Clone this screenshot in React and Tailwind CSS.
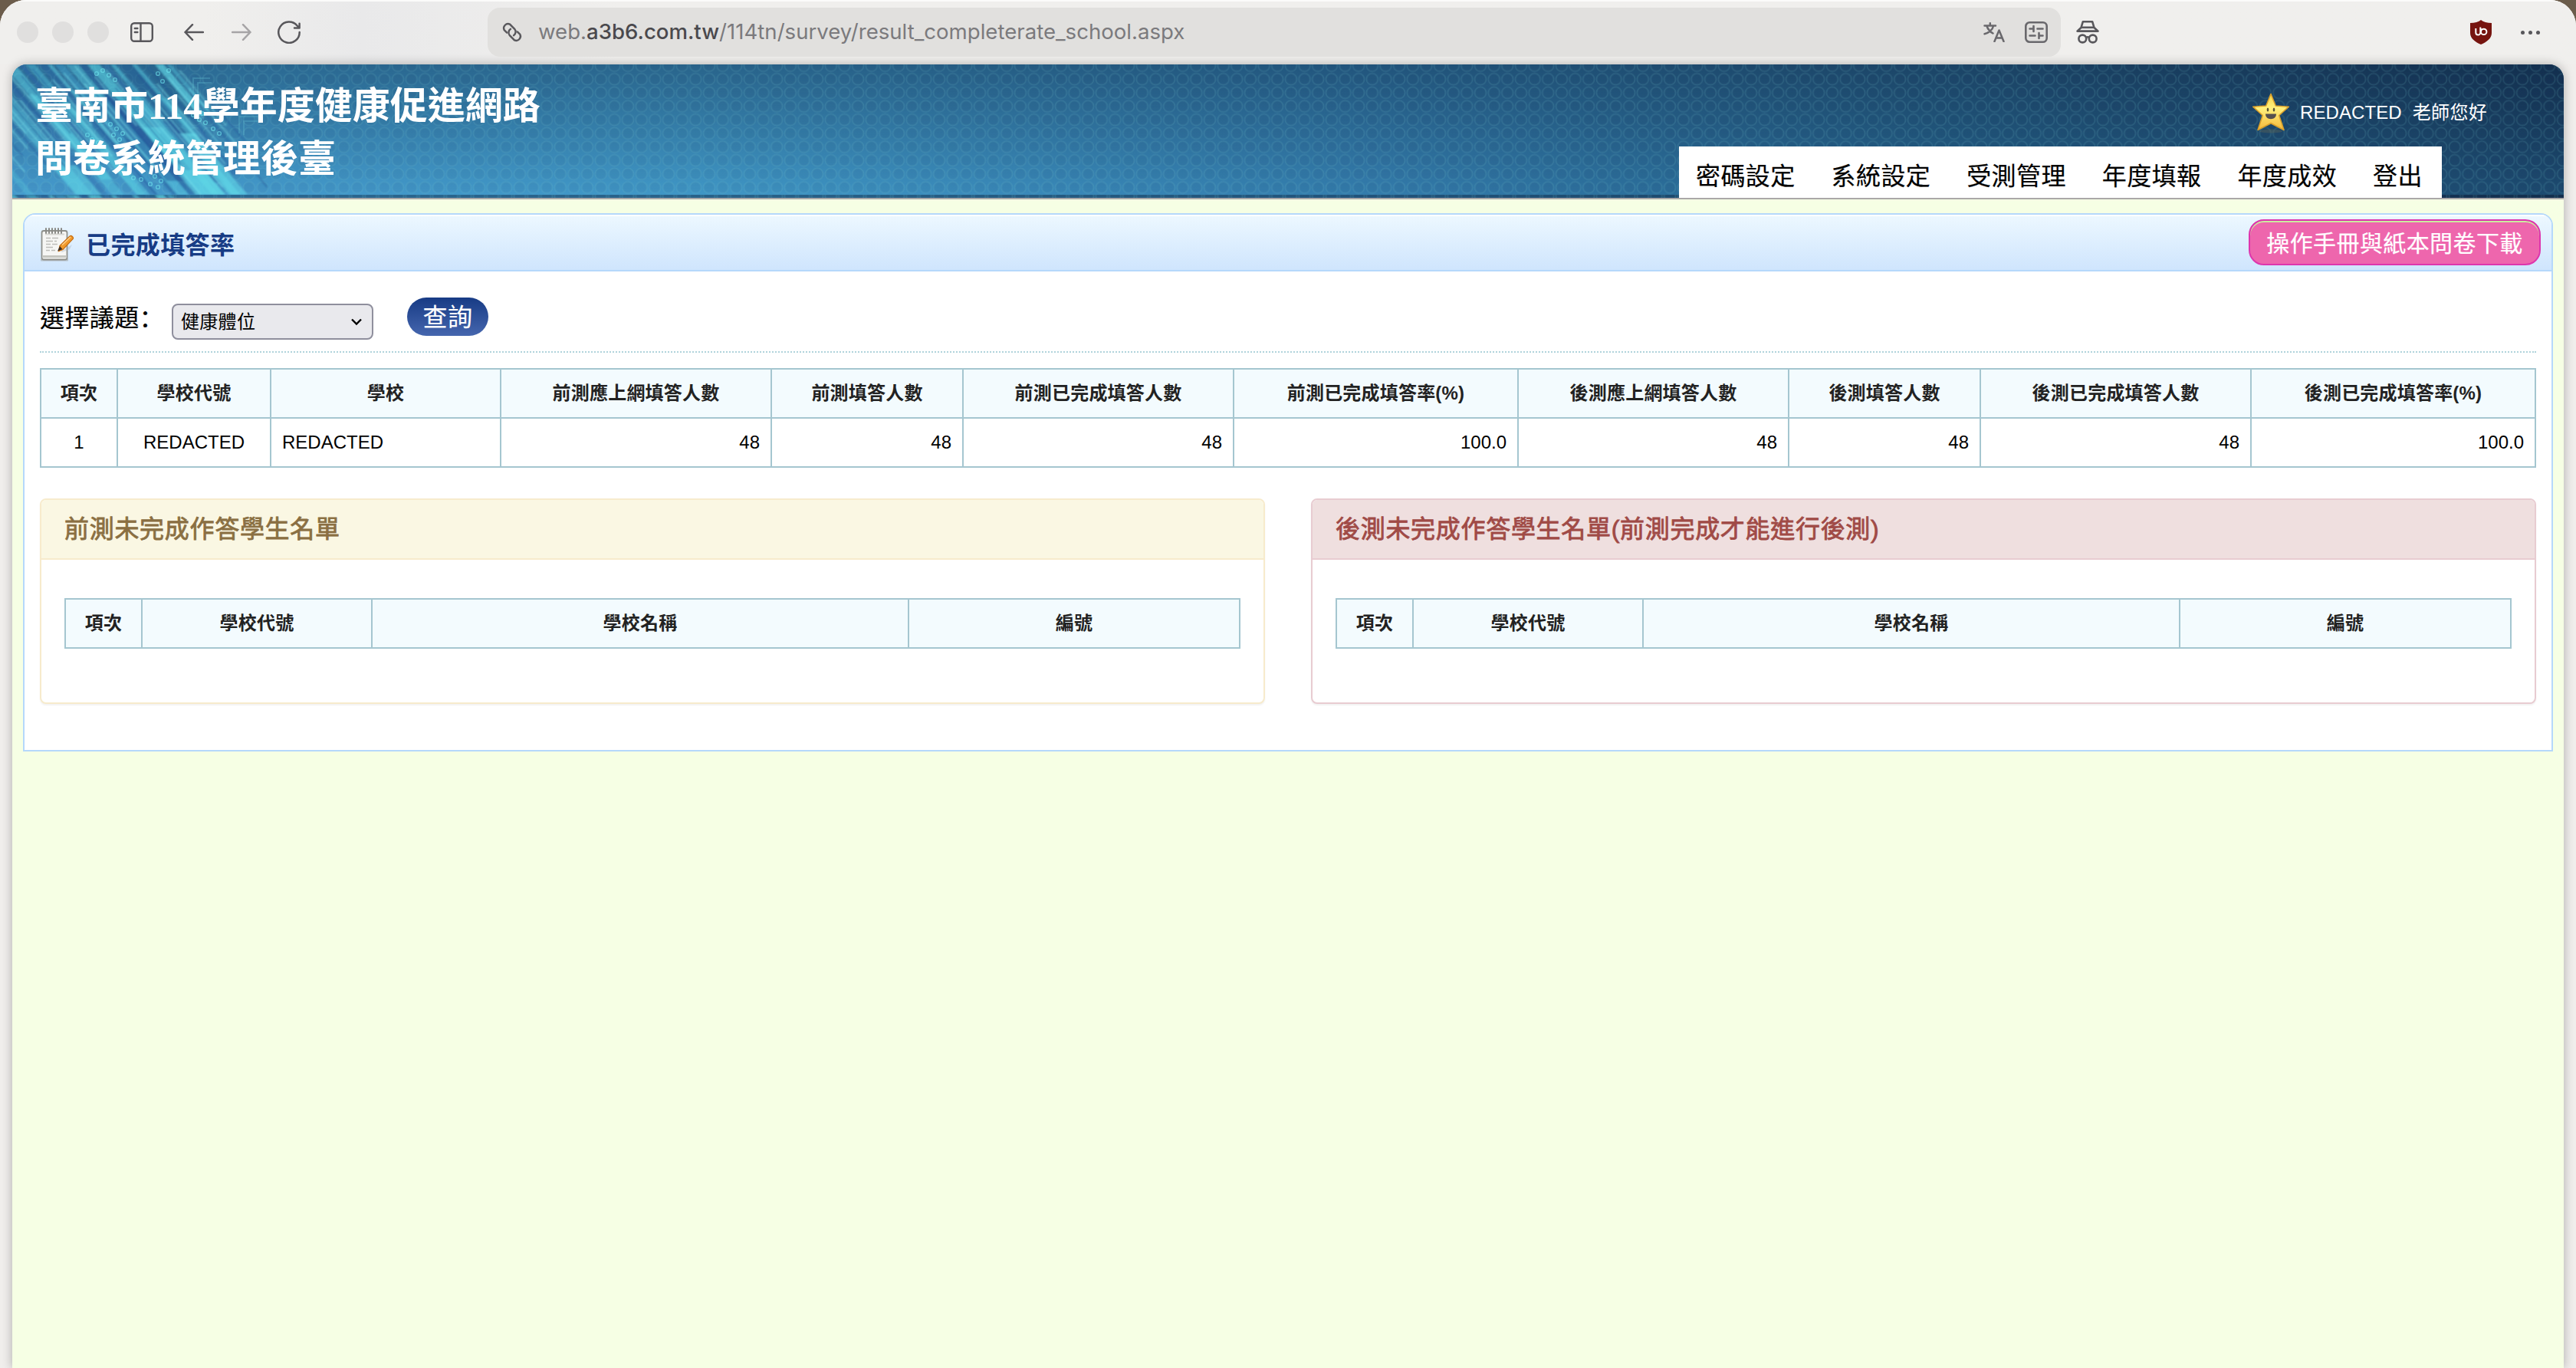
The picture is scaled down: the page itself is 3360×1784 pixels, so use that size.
import clsx from 'clsx'

const summaryColumns = [
  { label: '項次', value: '1', width: 100, align: 'center' },
  { label: '學校代號', value: 'REDACTED', width: 200, align: 'center' },
  { label: '學校', value: 'REDACTED', width: 300, align: 'left' },
  { label: '前測應上網填答人數', value: '48', width: 353, align: 'right' },
  { label: '前測填答人數', value: '48', width: 250, align: 'right' },
  { label: '前測已完成填答人數', value: '48', width: 353, align: 'right' },
  { label: '前測已完成填答率(%)', value: '100.0', width: 371, align: 'right' },
  { label: '後測應上網填答人數', value: '48', width: 353, align: 'right' },
  { label: '後測填答人數', value: '48', width: 250, align: 'right' },
  { label: '後測已完成填答人數', value: '48', width: 353, align: 'right' },
  { label: '後測已完成填答率(%)', value: '100.0', width: 371, align: 'right' },
]

const studentColumns = [
  { label: '項次', width: 100 },
  { label: '學校代號', width: 300 },
  { label: '學校名稱', width: 700 },
  { label: '編號', width: 432 },
]

const navItems = ['密碼設定', '系統設定', '受測管理', '年度填報', '年度成效', '登出']

// x, y, length (vertical), thickness, colour, opacity
const streaks = [
  [-60, 0, 170, 16, '#5fd6e6', 0.5],
  [-30, 0, 170, 8, '#2a62a4', 0.45],
  [-12, 0, 150, 12, '#59d0e2', 0.7],
  [8, 0, 120, 5, '#2b64a8', 0.7],
  [18, 0, 170, 9, '#4fc4dc', 0.6],
  [34, 0, 170, 10, '#2763a3', 0.5],
  [46, 0, 170, 4, '#63dcea', 0.6],
  [55, 0, 100, 9, '#3f9fc9', 0.7],
  [70, 0, 170, 12, '#56cfe2', 0.6],
  [86, 0, 170, 8, '#235a9b', 0.65],
  [98, 0, 125, 12, '#5bd8e6', 0.75],
  [116, 0, 150, 7, '#2a6aa9', 0.6],
  [128, 0, 170, 5, '#57cce0', 0.7],
  [138, 0, 90, 16, '#225b8f', 0.65],
  [156, 0, 110, 5, '#55c8dd', 0.65],
  [168, 0, 70, 14, '#246088', 0.6],
  [186, 0, 66, 9, '#62deea', 0.8],
  [201, 0, 60, 5, '#54c6db', 0.6],
  [214, 0, 45, 8, '#2a6f9b', 0.6],
  [20, 40, 130, 12, '#5ad4e5', 0.5],
  [60, 50, 120, 14, '#63dfeb', 0.45],
  [108, 42, 110, 20, '#1e4e95', 0.55],
  [150, 40, 130, 12, '#5bd3e4', 0.7],
  [188, 44, 50, 12, '#58cde0', 0.55],
  [-50, 90, 80, 8, '#55cbdf', 0.4],
  [170, 82, 88, 20, '#5fd9e8', 0.65],
  [196, 74, 80, 10, '#1f529a', 0.6],
  [218, 90, 80, 16, '#63dfeb', 0.75],
  [236, 84, 60, 8, '#2b66a6', 0.6],
  [50, 132, 38, 26, '#62dcea', 0.55],
  [130, 110, 60, 12, '#3a86bf', 0.75],
  [146, 96, 74, 5, '#1d4c92', 0.5],
  [212, 138, 32, 30, '#62dfea', 0.65],
  [250, 132, 38, 12, '#5ed8e8', 0.75],
]

const fineLines = Array.from({ length: 46 }, (_, i) => ({
  x: -110 + i * 7.3,
  y: (i * 37) % 60,
  len: 50 + ((i * 53) % 70),
  light: i % 3 !== 0,
}))

const sparks = [
  [118, 8], [126, 14], [110, 12], [134, 20], [190, 12], [196, 22], [204, 8],
  [128, 78], [136, 84], [144, 90], [132, 92], [140, 98], [98, 92], [104, 98], [112, 102],
  [236, 66], [244, 72], [252, 76], [248, 64], [150, 142], [158, 148], [168, 150], [186, 146],
  [194, 152], [190, 160], [180, 156], [262, 84], [270, 90],
]

function HeaderArtwork() {
  return (
    <svg className="absolute inset-0 h-full w-full" viewBox="0 0 3328 174" preserveAspectRatio="none">
      <defs>
        <linearGradient id="low" x1="0" x2="1">
          <stop offset="0" stopColor="#469bce" />
          <stop offset="0.27" stopColor="#4097c6" />
          <stop offset="0.53" stopColor="#347dad" />
          <stop offset="0.75" stopColor="#25638c" />
          <stop offset="1" stopColor="#1d4b70" />
        </linearGradient>
        <linearGradient id="high" x1="0" x2="1">
          <stop offset="0" stopColor="#2c6c96" />
          <stop offset="0.27" stopColor="#29648b" />
          <stop offset="0.53" stopColor="#22557c" />
          <stop offset="0.75" stopColor="#1c4567" />
          <stop offset="1" stopColor="#132f4e" />
        </linearGradient>
        <linearGradient id="fade" x1="0" y1="0" x2="0" y2="1">
          <stop offset="0" stopColor="#fff" />
          <stop offset="1" stopColor="#000" />
        </linearGradient>
        <mask id="fadeMask">
          <rect width="3328" height="170" fill="url(#fade)" />
        </mask>
        <pattern id="rings" width="17.65" height="17.65" patternUnits="userSpaceOnUse" y="10.5">
          <circle cx="8.8" cy="8.8" r="7.4" fill="#0a2c4c" fillOpacity="0.05" stroke="#6fc3c9" strokeOpacity="0.15" strokeWidth="1.8" />
        </pattern>
        <clipPath id="tile">
          <rect width="3328" height="170" />
        </clipPath>
        <filter id="soft" x="-10%" y="-10%" width="120%" height="120%">
          <feGaussianBlur stdDeviation="0.9" />
        </filter>
        <g id="artwork" clipPath="url(#tile)">
          <rect width="3328" height="170" fill="url(#low)" />
          <rect width="3328" height="170" fill="url(#high)" mask="url(#fadeMask)" />
          <rect width="3328" height="170" fill="url(#rings)" />
          <g filter="url(#soft)">
            {streaks.map(([x, y, len, w, color, opacity]) => (
              <path
                key={`${x}-${y}`}
                d={`M${x} ${y}h${w * 1.3}l${len * 0.85} ${len}h${-w * 1.3}z`}
                fill={color}
                opacity={opacity * 0.75}
              />
            ))}
            {fineLines.map(({ x, y, len, light }) => (
              <path
                key={x}
                d={`M${x + y * 0.85} ${y}l${len * 0.85} ${len}`}
                stroke={light ? '#7be6f0' : '#1f5296'}
                strokeWidth="1.8"
                opacity="0.5"
              />
            ))}
          </g>
          {sparks.map(([x, y]) => (
            <circle key={`${x}-${y}`} cx={x} cy={y} r="2.4" fill="none" stroke="#6fe6ee" strokeWidth="1.4" opacity="0.6" />
          ))}
          <path d="M236 40V18h22M242 42V24h18M296 90V68h24M302 92V74h18" fill="none" stroke="#5cb4cc" strokeWidth="2" opacity="0.35" />
        </g>
      </defs>
      <use href="#artwork" />
      <use href="#artwork" y="170" />
    </svg>
  )
}

function BrowserBar() {
  return (
    <div className="flex h-[84px] items-center bg-[#f0efed] bg-linear-to-r from-[#f0efed] from-8% via-[#e9e9ea] via-14% to-[#f0efed] to-24% text-[#58575b] shadow-[inset_0_2px_0_#fbfbfa]">
      <div className="ml-[22px] flex gap-[18px]">
        <span className="h-7 w-7 rounded-full bg-[#e0dfde]" />
        <span className="h-7 w-7 rounded-full bg-[#e0dfde]" />
        <span className="h-7 w-7 rounded-full bg-[#e0dfde]" />
      </div>
      <svg className="ml-7 h-[26px] w-[30px]" viewBox="0 0 30 26" fill="none" stroke="currentColor" strokeWidth="2.4" strokeLinecap="round">
        <rect x="1.2" y="1.2" width="27.6" height="23.6" rx="4" />
        <path d="M13.5 1.5v23M5.8 8h3.6M5.8 13h3.6" />
      </svg>
      <svg className="ml-10 h-[22px] w-[26px]" viewBox="0 0 26 22" fill="none" stroke="currentColor" strokeWidth="2.5" strokeLinecap="round" strokeLinejoin="round">
        <path d="M25 11H1.5M11 1.2L1.5 11 11 20.8" />
      </svg>
      <svg className="ml-9 h-[22px] w-[26px] text-[#a6a4a6]" viewBox="0 0 26 22" fill="none" stroke="currentColor" strokeWidth="2.5" strokeLinecap="round" strokeLinejoin="round">
        <path d="M1 11h23.5M15 1.2l9.5 9.8L15 20.8" />
      </svg>
      <svg className="ml-[34px] h-[30px] w-[30px]" viewBox="0 0 30 30" fill="none" stroke="currentColor" strokeWidth="2.5" strokeLinecap="round" strokeLinejoin="round">
        <path d="M28.7 15A13.7 13.7 0 1 1 25.6 6.5L28 9M28.6 3.8V9.4H22" />
      </svg>

      <div className="ml-[244px] flex h-16 w-[2052px] items-center rounded-2xl bg-[#e1e0de]">
        <svg className="ml-[18px] h-7 w-7" viewBox="0 0 28 28" fill="none" stroke="currentColor" strokeWidth="2.4" strokeLinecap="round">
          <path d="M7.2 14.6L3.6 11A5.6 5.6 0 0 1 11 3.6l6.2 6.2a5.6 5.6 0 0 1-1.2 8.4" />
          <path d="M20.8 13.4l3.6 3.6A5.6 5.6 0 0 1 17 24.4l-6.2-6.2A5.6 5.6 0 0 1 12 9.8" />
        </svg>
        <span className="ml-[20px] font-['Inter','Liberation_Sans',sans-serif] text-[27.6px] whitespace-nowrap text-[#7b7a7d]">
          web.<span className="font-medium text-[#4a494d]">a3b6.com.tw</span>/114tn/survey/result_completerate_school.aspx
        </span>
        <div className="mr-[17px] ml-auto flex items-center gap-[26px] text-[#69686c]">
          <svg className="h-[26px] w-[28px]" viewBox="0 0 28 26" fill="none" stroke="currentColor" strokeWidth="2.5" strokeLinecap="round" strokeLinejoin="round">
            <path d="M1.5 4.5H16M8.8 1.2v3.3M4.5 5C6 9.5 9 12.5 12.5 14.5M13 5C12 10 7 14 1.5 15.2" />
            <path d="M14.5 25L20.5 10.5 26.5 25M16.5 20.5h8" />
          </svg>
          <svg className="h-7 w-[30px]" viewBox="0 0 30 28" fill="none" stroke="currentColor" strokeWidth="2.6" strokeLinecap="round">
            <rect x="1.3" y="1.3" width="27.4" height="25.4" rx="5" />
            <path d="M6.5 9.5h5M11.5 6v7M16.5 9.5h7M6.5 18.5h7M18.5 15v7M18.5 18.5h5" />
          </svg>
        </div>
      </div>

      <svg className="ml-5 h-[30px] w-[30px]" viewBox="0 0 30 30" fill="none" stroke="currentColor" strokeWidth="2.6" strokeLinejoin="round">
        <path d="M8.8 1.3h12.4l2.3 7.7 5 4.6H1.5L6.5 9z" />
        <path d="M7 8.8h16" />
        <circle cx="8.3" cy="23.5" r="4.9" />
        <circle cx="21.7" cy="23.5" r="4.9" />
        <path d="M13 21.8q2-1.2 4 0" />
      </svg>

      <svg className="ml-auto h-8 w-[30px]" viewBox="0 0 30 32">
        <path d="M15 0c3 2.6 8 4 14 4v13c0 7-6 11.5-14 15C7 28.5 1 24 1 17V4c6 0 11-1.4 14-4z" fill="#76140f" />
        <path d="M8.3 11v5.5a3 3 0 0 0 6 0V9.5M14.8 11v5" fill="none" stroke="#fff" strokeWidth="2" />
        <circle cx="18.7" cy="15.4" r="3.7" fill="none" stroke="#fff" strokeWidth="2" />
      </svg>
      <div className="mr-[47px] ml-[37px] flex gap-[5px]">
        <span className="h-[5px] w-[5px] rounded-full bg-current" />
        <span className="h-[5px] w-[5px] rounded-full bg-current" />
        <span className="h-[5px] w-[5px] rounded-full bg-current" />
      </div>
    </div>
  )
}

function StarIcon() {
  return (
    <svg className="h-[54px] w-[50px]" viewBox="0 0 50 54">
      <defs>
        <linearGradient id="star" x1="0" y1="0" x2="0" y2="1">
          <stop offset="0" stopColor="#f6d64a" />
          <stop offset="0.4" stopColor="#fff07c" />
          <stop offset="1" stopColor="#f5b93c" />
        </linearGradient>
      </defs>
      <ellipse cx="25" cy="50" rx="15" ry="2.5" fill="#6b6a50" opacity="0.35" />
      <path
        d="M25 1.5l6.3 15.5 17 1.2-12.6 11.3L42 48.500l-17-8.800-17 8.800 6.300-19L1.700 18.200l17-1.200z"
        fill="url(#star)"
        stroke="#d9a02c"
        strokeWidth="1.6"
        strokeLinejoin="round"
      />
      <ellipse cx="21" cy="22" rx="1.3" ry="2.6" fill="#5a5436" />
      <ellipse cx="29" cy="22" rx="1.3" ry="2.6" fill="#5a5436" />
      <path d="M18 27.5h14c0 4.5-3 6.700-7 6.700s-7-2.200-7-6.700z" fill="#56504d" />
    </svg>
  )
}

function NotepadIcon() {
  return (
    <svg className="h-11 w-11" viewBox="0 0 44 44">
      <rect x="1" y="40" width="36" height="3.5" rx="1" fill="#9a9a94" opacity="0.5" />
      <rect x="2.5" y="4" width="33" height="37.5" rx="2.5" fill="#f6f6f4" stroke="#8f908b" strokeWidth="1.8" />
      <path d="M4 37.5h30" stroke="#c5c6c0" strokeWidth="3" />
      <path d="M7 8.5h25" stroke="#d6d6d2" strokeWidth="2" />
      <path d="M8 1v6M12 1v6M16 1v6M20 1v6M24 1v6M28 1v6" stroke="#8a8a86" strokeWidth="2" strokeLinecap="round" />
      <path d="M8 13.5h6M16 13.5h8M8 17.5h9M19 17.5h3M8 21.5h6M16 21.5h7M8 25.5h9M8 29.5h5M15 29.5h5" stroke="#bdbdb9" strokeWidth="1.7" />
      <path d="M27 31l15-9-3 6-10 4z" fill="#9fb0bf" opacity="0.35" />
      <path d="M26 23.5L39 11c2-1.6 5 1 4.5 3.2L30 28.500l-5.500 2z" fill="#f19a2c" stroke="#c66d12" strokeWidth="1.2" />
      <path d="M29 22.5L40 12" stroke="#ffd08a" strokeWidth="1.5" />
      <path d="M26 24l3.5 4-6.5 2.5z" fill="#3c2d22" />
    </svg>
  )
}

function SiteHeader() {
  return (
    <header className="relative flex h-[176px] justify-between overflow-hidden border-b-2 border-[#aaa8a8]">
      <HeaderArtwork />
      <h1 className="relative pt-[20px] pl-[30px] font-['Liberation_Serif','Noto_Sans_CJK_TC',serif] text-[49px] leading-[69px] font-bold text-white">
        臺南市114學年度健康促進網路
        <br />
        問卷系統管理後臺
      </h1>
      <div className="relative mr-[159px] flex flex-col items-end justify-between">
        <div className="mt-[37px] -mr-[59px] flex items-center text-2xl tracking-[0.1px] text-white">
          <StarIcon />
          <span className="-mt-[3px] ml-[13px]">REDACTED</span>
          <span className="-mt-[3px] ml-[14px] tracking-[0.3px]">老師您好</span>
        </div>
        <nav className="flex h-[67px] w-[995px] gap-[47px] bg-white pt-[7px] pl-[22px] text-[32px] leading-[64px] tracking-[0.4px] text-black [-webkit-text-stroke:0.2px]">
          {navItems.map((item) => (
            <a key={item} className="shrink-0">{item}</a>
          ))}
        </nav>
      </div>
    </header>
  )
}

function HeadCell({ children }) {
  return (
    <th className="h-16 border-2 border-[#a5c6d0] bg-[#f3fbfe] p-0 text-center font-bold tracking-[0.2px] text-[#222]">
      {children}
    </th>
  )
}

function SummaryTable() {
  return (
    <table className="mt-5 w-[3256px] table-fixed border-collapse text-2xl">
      <colgroup>
        {summaryColumns.map((col) => (
          <col key={col.label} style={{ width: col.width }} />
        ))}
      </colgroup>
      <thead>
        <tr>
          {summaryColumns.map((col) => (
            <HeadCell key={col.label}>{col.label}</HeadCell>
          ))}
        </tr>
      </thead>
      <tbody>
        <tr>
          {summaryColumns.map((col) => (
            <td
              key={col.label}
              className={clsx(
                'h-16 border-2 border-[#a5c6d0] px-[14px] py-0 text-black',
                col.align === 'center' && 'text-center',
                col.align === 'right' && 'text-right'
              )}
            >
              {col.value}
            </td>
          ))}
        </tr>
      </tbody>
    </table>
  )
}

function StudentPanel({ title, danger }) {
  return (
    <section
      className={clsx(
        'h-[268px] w-[1598px] overflow-hidden rounded-lg border-2 bg-white shadow-[0_2px_2px_rgba(0,0,0,0.05)]',
        danger ? 'border-[#e8ccd1]' : 'border-[#f7ebcc]'
      )}
    >
      <h3
        className={clsx(
          'h-[78px] border-b-2 pl-[30px] text-[32px] leading-[77px] tracking-[0.7px] [-webkit-text-stroke:0.8px]',
          danger ? 'border-[#e8ccd1] bg-[#efdfdf] text-[#a04a46]' : 'border-[#f7ebcc] bg-[#faf7e3] text-[#8a6f42]'
        )}
      >
        {title}
      </h3>
      <table className="mt-[50px] ml-[30px] w-[1534px] table-fixed border-collapse text-2xl">
        <colgroup>
          {studentColumns.map((col) => (
            <col key={col.label} style={{ width: col.width }} />
          ))}
        </colgroup>
        <thead>
          <tr>
            {studentColumns.map((col) => (
              <HeadCell key={col.label}>{col.label}</HeadCell>
            ))}
          </tr>
        </thead>
      </table>
    </section>
  )
}

function QueryForm() {
  return (
    <div className="flex h-[106px] items-start border-b-2 border-dotted border-[#b0d3db]">
      <label className="mt-[34px] text-[32px] leading-[48px] tracking-[0.4px] text-black [-webkit-text-stroke:0.2px]">
        選擇議題<span className="font-['Noto_Sans_CJK_SC',sans-serif]">：</span>
      </label>
      <div className="mt-[42px] ml-[10px] flex h-[47px] w-[263px] items-center justify-between rounded-lg border-2 border-[#8f8f9d] bg-[#e9e9ed] pr-[13px] pl-[10px] text-2xl tracking-[0.3px] text-black">
        健康體位
        <svg className="h-[10px] w-[14px]" viewBox="0 0 14 10" fill="none" stroke="currentColor" strokeWidth="2.4">
          <path d="M1 1.5l6 6 6-6" />
        </svg>
      </div>
      <button className="mt-[34px] ml-11 h-[50px] w-[106px] rounded-full bg-linear-to-b from-[#173b85] to-[#4566ae] text-[32px] leading-[52px] tracking-[0.4px] text-white [-webkit-text-stroke:0.2px]">
        查詢
      </button>
    </div>
  )
}

export default function App() {
  return (
    <div className="h-[1784px] w-[3360px] overflow-hidden bg-[#6b5c4b] font-['Liberation_Sans','Noto_Sans_CJK_TC',sans-serif]">
      <div className="h-full overflow-hidden rounded-t-[34px] bg-[#f0eeec]">
        <BrowserBar />
        <div className="mx-4 h-[1700px] overflow-hidden rounded-t-[19px] bg-[#f6ffe4] shadow-[0_0_14px_rgba(0,0,0,0.28)]">
          <SiteHeader />
          <main className="mx-[14px] mt-[18px] h-[702px] overflow-hidden rounded-t-2xl border-2 border-[#b5d8fb] bg-white">
            <div className="flex h-[74px] items-center border-b-2 border-[#b5d8fb] bg-linear-to-b from-[#edf8ff] to-[#cfe5fd] pr-[14px] pl-5 shadow-[inset_0_2px_0_#fff]">
              <div className="pt-[6px]">
                <NotepadIcon />
              </div>
              <h2 className="ml-[16px] pt-[7px] text-[32px] font-bold tracking-[0.4px] text-[#173c85]">已完成填答率</h2>
              <button className="ml-auto h-[60px] w-[381px] rounded-[20px] border-2 border-[#de35ad] bg-[#ee66ad] pt-[3px] text-[30px] leading-[53px] tracking-[0.4px] whitespace-nowrap text-white shadow-[inset_0_2px_0_#cdeaa0] [-webkit-text-stroke:0.2px]">
                操作手冊與紙本問卷下載
              </button>
            </div>
            <div className="px-5">
              <QueryForm />
              <SummaryTable />
              <div className="mt-10 flex justify-between">
                <StudentPanel title="前測未完成作答學生名單" />
                <StudentPanel danger title="後測未完成作答學生名單(前測完成才能進行後測)" />
              </div>
            </div>
          </main>
        </div>
      </div>
    </div>
  )
}
